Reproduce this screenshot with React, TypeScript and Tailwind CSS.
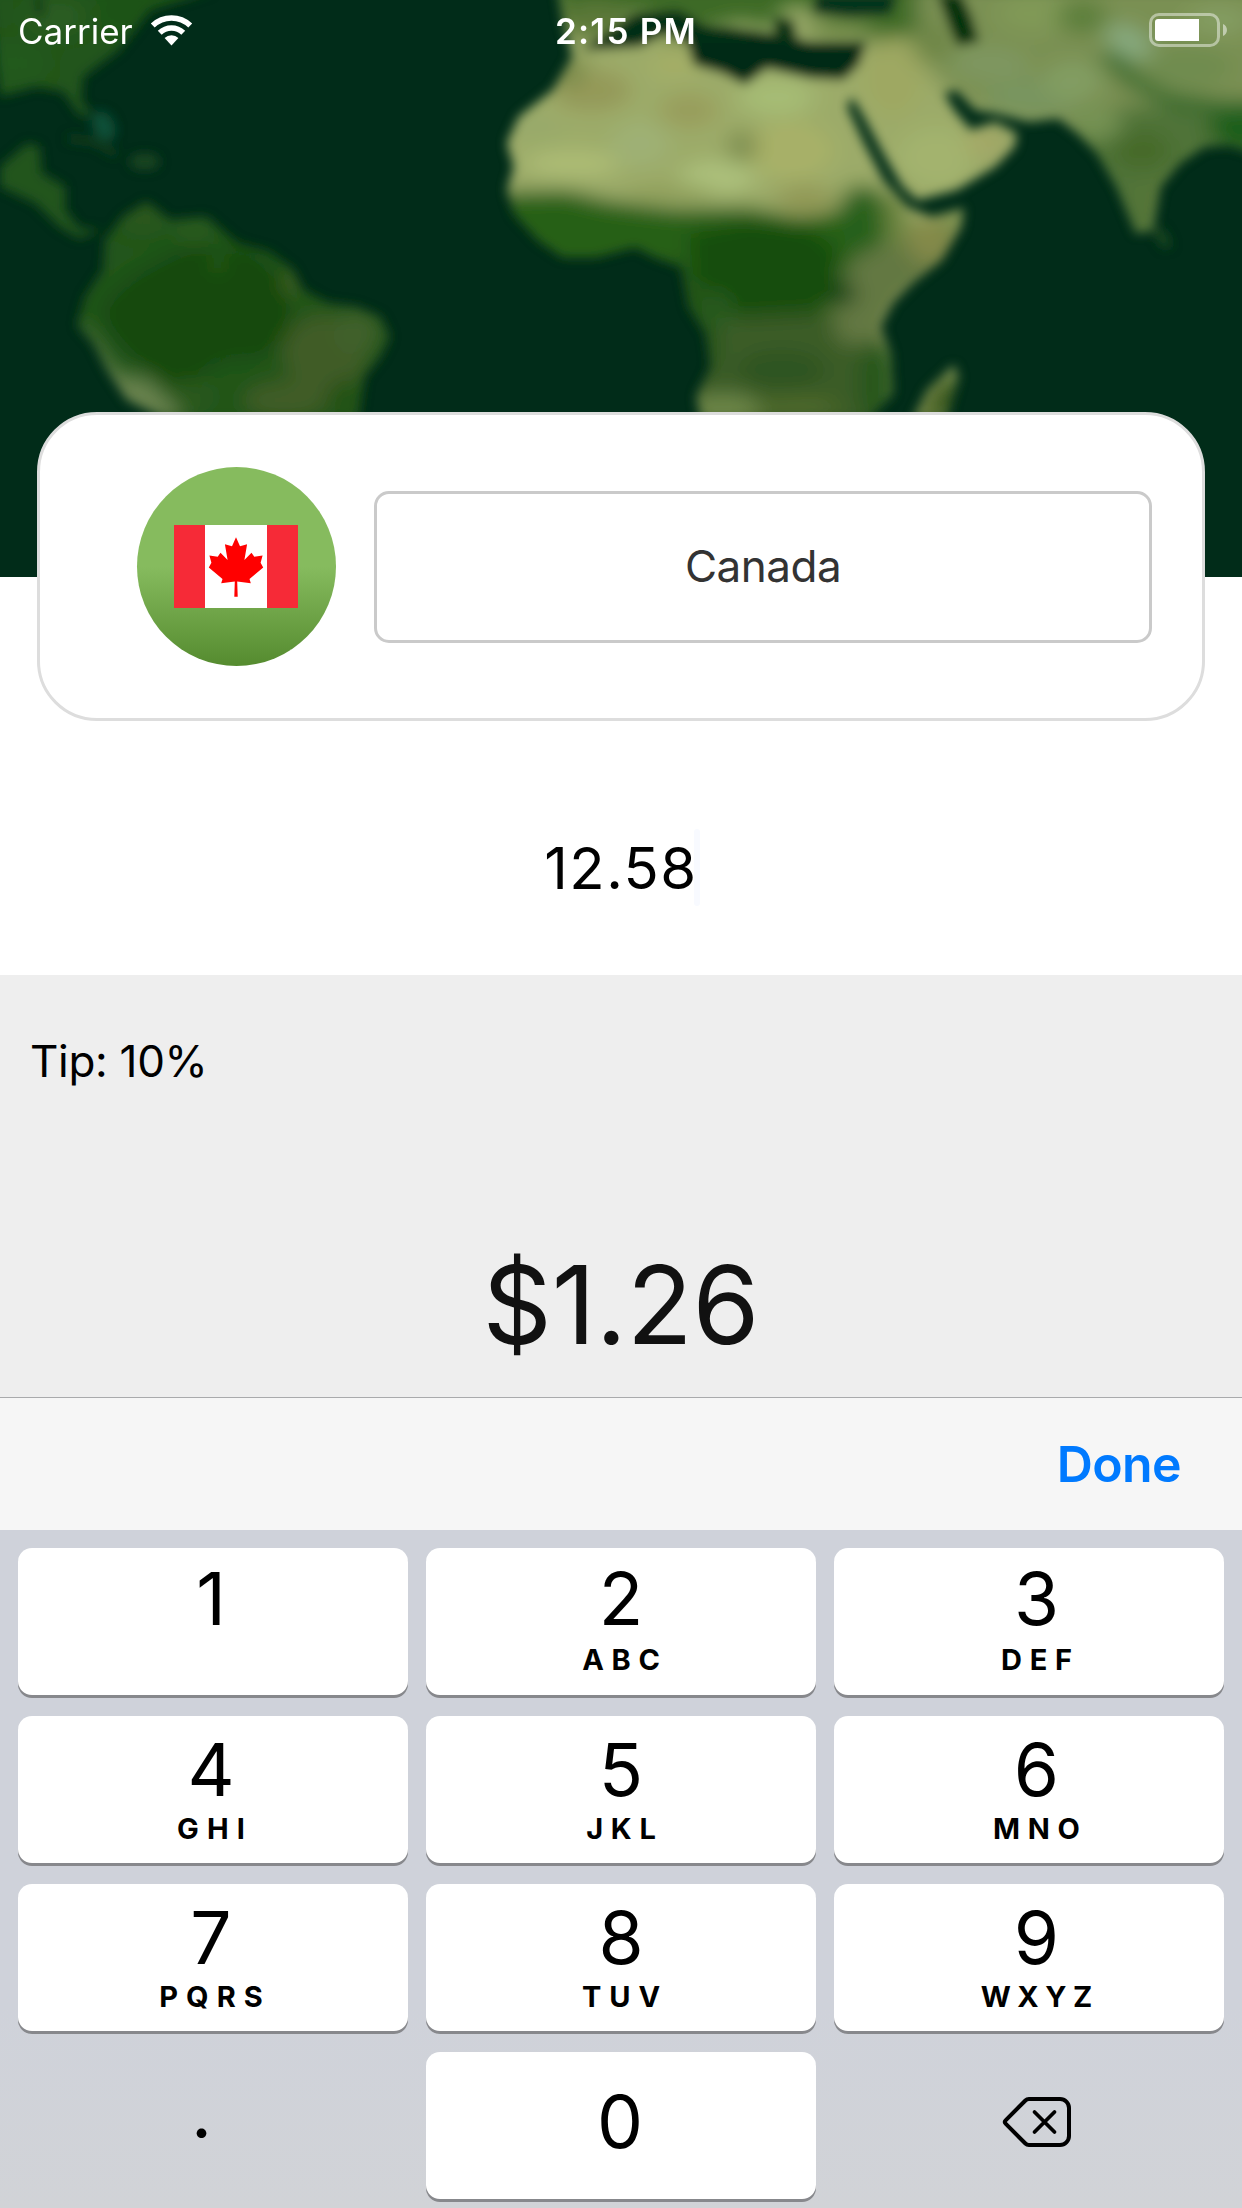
import React from 'react';

function MapBackdrop() {
  return (
    <svg className="absolute inset-0 h-[577px] w-[1242px]" viewBox="0 0 1242 577" preserveAspectRatio="none">
      <defs>
        <filter id="soft" filterUnits="userSpaceOnUse" x="-60" y="-60" width="1362" height="700">
          <feGaussianBlur stdDeviation="5.5" />
        </filter>
        <filter id="haze" filterUnits="userSpaceOnUse" x="-100" y="-100" width="1850" height="1500">
          <feGaussianBlur stdDeviation="21 25" />
        </filter>
        <clipPath id="americas">
          <path d="M-30 -30H540L380 30L300 150L210 230L205 300L235 350L200 345L160 275L90 260L0 290ZM370 605L430 660L520 650L560 690L600 730L680 755L740 810L765 870L830 910L900 920L960 950L985 1010L960 1070L920 1130L905 1260H420L320 1200L270 1110L235 1030L195 975L215 890L260 810L265 720L310 650ZM70 430L100 440L105 520L165 560L165 630L200 685L255 690L200 715L150 680L90 610L0 560V500Z" />
        </clipPath>
        <clipPath id="oldworld">
          <path d="M160 -30H1620V470L1540 435L1490 440L1440 490L1400 560L1385 690L1350 700L1310 560L1270 460L1230 400L1190 355L1130 365L1060 340L1020 330L980 270L955 280L975 330L1010 390L1060 365L1105 400L1100 440L1060 500L980 570L900 600L870 560L830 460L790 350L765 290L755 320L790 430L830 540L880 620L930 650L995 625L990 680L950 780L890 850L850 910L825 980L845 1060L850 1180L800 1260H455L445 1190L475 1100L465 1000L430 920L415 800L360 770L320 740L240 770L170 770L120 720L70 640L55 570L70 500L55 430L80 350L150 270L190 170L170 60ZM975 1095L985 1130L960 1260H890L920 1170Z" />
        </clipPath>
      </defs>
      <rect width="1242" height="577" fill="#012c19" />
      <g filter="url(#soft)">
        <g transform="scale(.39604 .33333)">
          <g clipPath="url(#americas)">
            <rect x="-40" y="-40" width="1100" height="1320" fill="#21551a" />
            <g filter="url(#haze)">
              <ellipse cx="140" cy="50" rx="80" ry="60" fill="#2b5b22" />
              <ellipse cx="30" cy="190" rx="90" ry="60" fill="#235a1b" />
              <ellipse cx="330" cy="30" rx="90" ry="60" fill="#1a5213" />
              <ellipse cx="360" cy="650" rx="60" ry="50" fill="#2b571f" />
              <ellipse cx="490" cy="690" rx="40" ry="26" fill="#2d5e20" />
              <path d="M470 740L640 750L730 850L740 960L680 1070L560 1080L460 1170L380 1130L280 1010L250 920L330 830Z" fill="#12480f" />
              <ellipse cx="820" cy="1060" rx="110" ry="120" fill="#3f5b25" />
              <ellipse cx="900" cy="1000" rx="60" ry="70" fill="#40602a" />
              <ellipse cx="720" cy="1200" rx="110" ry="60" fill="#405c26" />
              <ellipse cx="480" cy="1190" rx="60" ry="50" fill="#2b581e" />
              <ellipse cx="870" cy="1200" rx="40" ry="60" fill="#225119" />
              <path d="M185 960L225 1010L290 1120L380 1140L470 1260H360L240 1160Z" fill="#6b8350" />
              <ellipse cx="735" cy="850" rx="18" ry="35" fill="#4a6426" />
              <ellipse cx="550" cy="790" rx="22" ry="30" fill="#225a18" />
            </g>
          </g>
          <ellipse cx="262" cy="378" rx="28" ry="46" fill="#0f5038" transform="rotate(-18 262 378)" />
          <path d="M170 415L240 425L295 465" fill="none" stroke="#123f1e" strokeWidth="18" />
          <ellipse cx="365" cy="485" rx="38" ry="24" fill="#1b4720" />
          <ellipse cx="100" cy="20" rx="14" ry="34" fill="#124014" />
        </g>
        <g transform="translate(480 0) scale(.48597 .33333)">
          <g clipPath="url(#oldworld)">
            <rect x="0" y="-40" width="1640" height="1320" fill="#98a868" />
            <g filter="url(#haze)">
              <rect x="-80" y="150" width="1100" height="480" fill="#9cab69" />
              <path d="M150 -80H960V90L780 130L720 60L640 0L600 90L540 60L400 120L330 30L250 90L160 90Z" fill="#3d6a28" />
              <ellipse cx="240" cy="60" rx="70" ry="60" fill="#5c7838" />
              <ellipse cx="740" cy="95" rx="70" ry="35" fill="#748d4c" />
              <path d="M-60 580L180 570L260 600L400 625L560 620L650 655L730 640L760 560L820 560L850 690L810 760L760 850L700 980L480 1100L380 900L-60 800Z" fill="#256019" />
              <path d="M430 700L560 660L680 680L740 760L730 900L640 980L520 940L440 860Z" fill="#144e10" />
              <path d="M440 960L700 940L830 960L860 1300H400Z" fill="#3b5c26" />
              <path d="M385 760L470 860L490 1060L460 1150L390 1000Z" fill="#205418" />
              <ellipse cx="620" cy="1110" rx="90" ry="60" fill="#2d5520" />
              <ellipse cx="500" cy="1230" rx="90" ry="50" fill="#6c8547" />
              <ellipse cx="650" cy="1220" rx="90" ry="30" fill="#4f6a2c" />
              <ellipse cx="820" cy="1150" rx="40" ry="150" fill="#28571e" />
              <ellipse cx="490" cy="930" rx="22" ry="60" fill="#2c5b20" />
              <path d="M770 770L850 720L1010 590L980 790L870 900L820 1030L740 1030L720 900Z" fill="#647843" />
              <ellipse cx="925" cy="720" rx="45" ry="70" fill="#858a48" />
              <ellipse cx="980" cy="650" rx="40" ry="40" fill="#7c9150" />
              <ellipse cx="785" cy="650" rx="44" ry="95" fill="#27611b" />
              <ellipse cx="745" cy="880" rx="26" ry="40" fill="#0d4215" />
              <ellipse cx="855" cy="650" rx="24" ry="85" fill="#6c843f" />
              <ellipse cx="230" cy="270" rx="80" ry="60" fill="#949958" />
              <ellipse cx="400" cy="190" rx="50" ry="50" fill="#a4ae66" />
              <ellipse cx="330" cy="430" rx="60" ry="70" fill="#9eb074" />
              <ellipse cx="190" cy="490" rx="100" ry="45" fill="#acbb74" />
              <ellipse cx="490" cy="530" rx="80" ry="50" fill="#acc07b" />
              <ellipse cx="610" cy="290" rx="80" ry="60" fill="#a6bb74" />
              <ellipse cx="640" cy="450" rx="90" ry="90" fill="#a7b068" />
              <ellipse cx="540" cy="440" rx="28" ry="50" fill="#7b8c4e" />
              <ellipse cx="430" cy="330" rx="60" ry="50" fill="#989e5c" />
              <ellipse cx="120" cy="380" rx="50" ry="40" fill="#98aa6b" />
              <ellipse cx="390" cy="575" rx="90" ry="22" fill="#8f9f5a" />
              <ellipse cx="670" cy="600" rx="60" ry="46" fill="#929957" />
              <ellipse cx="180" cy="210" rx="40" ry="50" fill="#7c8c4c" />
              <ellipse cx="850" cy="230" rx="60" ry="120" fill="#9ea862" />
              <ellipse cx="940" cy="470" rx="80" ry="90" fill="#a3b36e" />
              <ellipse cx="1040" cy="430" rx="40" ry="40" fill="#a6a866" />
              <path d="M900 -90H1740V360H1480L1400 360L1200 400L1060 360L960 270L900 160Z" fill="#7a9052" />
              <ellipse cx="1140" cy="40" rx="80" ry="60" fill="#809957" />
              <ellipse cx="1050" cy="190" rx="80" ry="50" fill="#7e9760" />
              <ellipse cx="1140" cy="290" rx="100" ry="60" fill="#79955e" />
              <ellipse cx="1220" cy="240" rx="60" ry="60" fill="#829d62" />
              <ellipse cx="930" cy="130" rx="40" ry="60" fill="#6e8647" />
              <path d="M1210 380L1320 320L1480 320L1700 300V500H1480L1420 560L1400 760L1310 700Z" fill="#507338" />
              <ellipse cx="1360" cy="450" rx="60" ry="60" fill="#476b2b" />
              <ellipse cx="1270" cy="370" rx="50" ry="50" fill="#759253" />
              <ellipse cx="1370" cy="600" rx="26" ry="80" fill="#547537" />
              <ellipse cx="1570" cy="380" rx="70" ry="80" fill="#1f5f1e" />
              <ellipse cx="1240" cy="50" rx="50" ry="50" fill="#5b7f3b" />
              <ellipse cx="1335" cy="125" rx="36" ry="60" fill="#88ab80" transform="rotate(-35 1335 125)" />
              <ellipse cx="1460" cy="200" rx="90" ry="60" fill="#708c50" />
              <ellipse cx="1520" cy="60" rx="70" ry="50" fill="#839b60" />
              <path d="M1290 160L1345 240L1410 295L1570 330" fill="none" stroke="#2b6627" strokeWidth="38" />
              <ellipse cx="935" cy="1210" rx="26" ry="90" fill="#4c6427" transform="rotate(16 935 1210)" />
              <path d="M1000 1060L960 1200L950 1260H1010Z" fill="#174b18" />
            </g>
          </g>
          <path d="M425 120L500 80L620 105L680 125L795 125L780 195L748 240L680 235L590 205L545 255L500 220L440 195Z" fill="#012c19" />
          <path d="M320 40L410 30L460 75L540 90L560 130H440L380 100L330 140L210 150L260 100Z" fill="#062f19" />
          <path d="M605 50L645 60L655 125L605 115Z" fill="#0a3519" />
          <path d="M690 -20L860 -20L845 44L760 50L685 40Z" fill="#03301a" />
          <path d="M940 -20L990 -20L1012 50L1027 125L983 138L968 90Z" fill="#04330f" />
          <path d="M1395 690L1415 740" stroke="#1d4b20" strokeWidth="20" />
        </g>
      </g>
    </svg>
  );
}

function StatusBar() {
  return (
    <div className="relative grid h-[62px] grid-cols-3 items-center text-[35px] leading-[62px] text-white">
      <div className="flex items-center pl-[18px]">
        <span>Carrier</span>
        <svg className="-mt-px ml-[17px] h-[31px] w-[43px]" viewBox="0 0 43 31">
          <path d="M0.8 8.6a29.6 29.6 0 0 1 41.4 0l-3.9 4a24 24 0 0 0-33.6 0z" fill="#fff" />
          <path d="M7.8 15.8a19.6 19.6 0 0 1 27.4 0l-3.9 4a14 14 0 0 0-19.6 0z" fill="#fff" />
          <path d="M14.6 23a9.8 9.8 0 0 1 13.8 0l-6.9 7.4z" fill="#fff" />
        </svg>
      </div>
      <div className="pl-[10px] text-center font-semibold tracking-[1.25px]">2:15 PM</div>
      <div className="flex items-center justify-end pr-[15px]">
        <svg className="-mt-[2px] h-[34px] w-[78px]" viewBox="0 0 78 34">
          <rect x="1.5" y="1.5" width="68" height="31" rx="8.5" fill="none" stroke="#fff" strokeOpacity=".45" strokeWidth="3" />
          <path d="M9 6H50V28H9a3 3 0 0 1-3-3V9a3 3 0 0 1 3-3z" fill="#fff" />
          <path d="M74 11c5.3 2 5.3 10 0 12z" fill="#fff" fillOpacity=".5" />
        </svg>
      </div>
    </div>
  );
}

function CanadaFlag() {
  return (
    <svg className="h-[83px] w-[124px]" viewBox="0 0 124 83">
      <rect width="124" height="83" fill="#fff" />
      <rect width="31" height="83" fill="#f62a37" />
      <rect x="93" width="31" height="83" fill="#f62a37" />
      <path
        d="M62 12.2L66 21.3L73.1 19.2L70.4 35L77.5 27.7L80.3 31.7L88.6 30.4L86.6 37.7L89.2 42.4L75.5 54L76.8 58.2L63.2 56.4L63.7 71.7H60.3L60.8 56.4L47.2 58.2L48.5 54L34.8 42.4L37.4 37.7L35.4 30.4L43.7 31.7L46.5 27.7L53.6 35L50.9 19.2L58 21.3Z"
        fill="#f00"
      />
    </svg>
  );
}

function Backspace() {
  return (
    <svg className="h-[52px] w-[70px]" viewBox="0 0 70 52" fill="none" stroke="#000" strokeLinecap="round" strokeLinejoin="round">
      <path d="M27 3H58a9 9 0 0 1 9 9V40a9 9 0 0 1-9 9H27a5 5 0 0 1-3.6-1.5L3.6 27.6a2.3 2.3 0 0 1 0-3.2L23.4 4.5A5 5 0 0 1 27 3z" strokeWidth="4" />
      <path d="M32.5 16L52.5 36M52.5 16L32.5 36" strokeWidth="3.8" />
    </svg>
  );
}

type KeyDef = { digit: string; letters?: string; tracking?: string };

const rows: KeyDef[][] = [
  [
    { digit: '1' },
    { digit: '2', letters: 'ABC', tracking: 'tracking-[7.7px] -mr-[7.7px]' },
    { digit: '3', letters: 'DEF', tracking: 'tracking-[7.7px] -mr-[7.7px]' },
  ],
  [
    { digit: '4', letters: 'GHI', tracking: 'tracking-[8.2px] -mr-[8.2px]' },
    { digit: '5', letters: 'JKL', tracking: 'tracking-[7.7px] -mr-[7.7px]' },
    { digit: '6', letters: 'MNO', tracking: 'tracking-[7.7px] -mr-[7.7px]' },
  ],
  [
    { digit: '7', letters: 'PQRS', tracking: 'tracking-[8px] -mr-[8px]' },
    { digit: '8', letters: 'TUV', tracking: 'tracking-[8px] -mr-[8px]' },
    { digit: '9', letters: 'WXYZ', tracking: 'tracking-[6.5px] -mr-[6.5px]' },
  ],
];

const columnNudge = ['pr-[4px]', '', 'pl-[15px]'];

function Key({ def, column, top }: { def: KeyDef; column: number; top: boolean }) {
  return (
    <button
      className={`flex h-[147px] flex-col items-center rounded-[14px] bg-white shadow-[0_3px_0_#87888c] ${columnNudge[column]} ${top ? 'pt-[11px]' : 'pt-[14px]'}`}
    >
      <span className="text-[73px] leading-[80px]">{def.digit}</span>
      {def.letters && (
        <span className={`text-[29px] font-bold leading-[40px] ${def.tracking} ${top ? 'mt-[1px]' : '-mt-[1px]'}`}>{def.letters}</span>
      )}
    </button>
  );
}

export default function App() {
  return (
    <main className="flex h-[2208px] w-[1242px] flex-col overflow-hidden bg-white font-['Inter','Liberation_Sans',sans-serif] text-black">
      <header className="relative h-[577px] shrink-0 overflow-hidden bg-[#012c19]">
        <MapBackdrop />
        <StatusBar />
      </header>

      <section className="relative mx-[37px] -mt-[165px] flex h-[309px] shrink-0 items-center rounded-[60px] border-[3px] border-[#dddddd] bg-white">
        <div className="ml-[97px] flex h-[199px] w-[199px] items-center justify-center rounded-full bg-[linear-gradient(180deg,#86bb5e_0%,#86bb5e_50%,#558b2f_100%)] pr-[2px]">
          <CanadaFlag />
        </div>
        <div className="ml-[38px] flex h-[152px] w-[778px] items-center justify-center rounded-[15px] border-[3px] border-[#cacaca] pb-[2px] text-[44px] tracking-[-0.5px] text-[#333]">
          Canada
        </div>
      </section>

      <div className="flex h-[254px] shrink-0 items-start justify-center pt-[108px]">
        <span className="pl-[2px] text-[58px] leading-[78px] tracking-[1.5px]">12.58</span>
        <span className="-ml-[4px] h-[77px] w-[6px] rounded-full bg-[#f8faff]" />
      </div>

      <section className="h-[422px] shrink-0 bg-[#eeeeee] pt-[56px]">
        <p className="pl-[30px] text-[44px] leading-[60px] tracking-[-0.3px]">Tip: 10%</p>
        <p className="mt-[154px] text-center text-[108px] leading-[120px] text-[#111]">$1.26</p>
      </section>

      <div className="flex h-[133px] shrink-0 items-center justify-end border-t border-[#a9aaac] bg-[#f6f6f6] pr-[61px]">
        <button className="text-[50px] font-semibold leading-none tracking-[-0.6px] text-[#007aff]">Done</button>
      </div>

      <section className="grid grow grid-cols-3 content-start gap-x-[18px] gap-y-[21px] bg-[linear-gradient(180deg,#cfd2da_0%,#cfd2da_70%,#d1d3d7_100%)] px-[18px] pt-[18px]">
        {rows.map((row, r) => row.map((def, c) => <Key key={def.digit} def={def} column={c} top={r === 0} />))}
        <button className="flex h-[147px] items-start justify-center pr-[23px] pt-[20px] text-[73px] leading-[80px]">.</button>
        <button className="flex h-[147px] items-start justify-center rounded-[14px] bg-white pr-[2px] pt-[30px] text-[73px] leading-[80px] shadow-[0_3px_0_#87888c]">0</button>
        <button className="flex h-[147px] items-center justify-center pb-[7px] pl-[16px]">
          <Backspace />
        </button>
      </section>
    </main>
  );
}
